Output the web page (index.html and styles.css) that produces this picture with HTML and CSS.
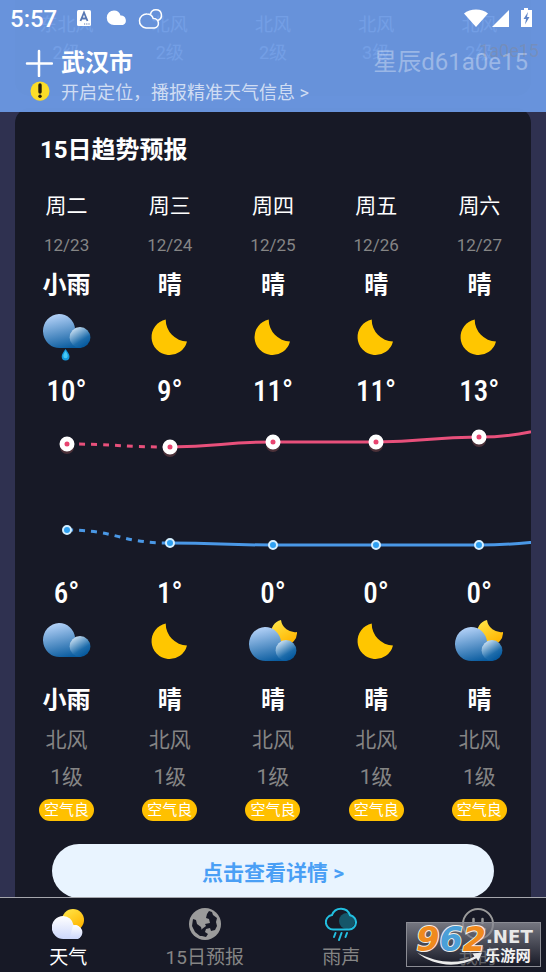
FILE: index.html
```html
<!DOCTYPE html>
<html lang="zh-CN">
<head>
    <meta charset="UTF-8">
    <meta name="viewport" content="width=device-width, initial-scale=1.0">
    <title>天气</title>
    <link rel="stylesheet" href="styles.css">
</head>
<body>

<!-- Weather icons -->
<svg class="sprite" width="0" height="0" aria-hidden="true">
    <defs>
        <linearGradient id="cloudBig" x1="0.3" y1="0" x2="0.6" y2="1">
            <stop offset="0" stop-color="#b4d2f8"/>
            <stop offset="1" stop-color="#0a5c9f"/>
        </linearGradient>
        <linearGradient id="cloudSmall" x1="0.2" y1="0.1" x2="0.7" y2="0.9">
            <stop offset="0" stop-color="#c4dcf0"/>
            <stop offset="0.7" stop-color="#1d6cab"/>
            <stop offset="1" stop-color="#075a9e"/>
        </linearGradient>
        <linearGradient id="moonGold" x1="0" y1="0" x2="0.6" y2="1">
            <stop offset="0" stop-color="#ffe94d"/>
            <stop offset="1" stop-color="#ffb400"/>
        </linearGradient>
        <linearGradient id="whiteCloud" x1="0" y1="0" x2="0" y2="1">
            <stop offset="0" stop-color="#ffffff"/>
            <stop offset="1" stop-color="#ccd7fb"/>
        </linearGradient>
        <g id="cloudShape">
            <path d="M16 1a16 16 0 0 1 16 14.500a10 10 0 0 1 5 19.500H17A16.500 17 0 0 1 16 1z" fill="url(#cloudBig)"/>
            <circle cx="37" cy="24.500" r="10.400" fill="url(#cloudSmall)"/>
        </g>
    </defs>
    <symbol id="rain" viewBox="0 0 48 48">
        <use href="#cloudShape"/>
        <path d="M22.500 36c2 3 4 5 4 7.500a3.900 3.900 0 0 1-7.800 0c0-2.500 2-4.500 3.800-7.500z" fill="#1597dc"/>
        <path d="M22.500 38c1.500 2 2.200 3.500 2.200 5a2.200 2.200 0 0 1-4.400 0c0-1.500 1-3 2.200-5z" fill="#45c8f5"/>
    </symbol>
    <symbol id="cloud" viewBox="0 0 48 48">
        <use href="#cloudShape" y="5"/>
    </symbol>
    <symbol id="moon" viewBox="0 0 48 48">
        <path d="M19.700 6.500A18 18 0 1 0 41 28.500A22 22 0 0 1 19.700 6.500z" fill="#ffc600"/>
    </symbol>
    <symbol id="moonCloud" viewBox="0 0 48 48">
        <path d="M32 3A13 13 0 1 0 48 15A14 14 0 0 1 32 3z" fill="url(#moonGold)"/>
        <use href="#cloudShape" y="9"/>
    </symbol>
</svg>

<div class="app">
    <header class="topbar">
        <div class="status">
            <span class="clock">5:57</span>
            <svg class="status-apps" width="90" height="24" viewBox="0 0 90 24" aria-hidden="true">
                <rect x="0" y="3" width="14" height="16" rx="1.500" fill="#fff"/>
                <path d="M3.500 14L7 5.500L10.500 14M4.800 11.500h4.400" fill="none" stroke="#5878b4" stroke-width="1.800"/>
                <path d="M7 17h6" stroke="#5878b4" stroke-width="1" stroke-dasharray="1.200 1"/>
                <path d="M37 3.500a7 7 0 0 1 6.500 5a5 5 0 0 1 2.500 9.500H37a7.200 7.200 0 0 1 0-14.500z" fill="#fff"/>
                <g fill="none" stroke="#fff" stroke-width="1.500">
                    <path d="M70 7a6.500 6.500 0 0 1 6.200 4.500a4.800 4.800 0 0 1 1.300 9.500H69a6.800 6.800 0 0 1 1-14z"/>
                    <path d="M73.500 7.500a5.500 5.500 0 1 1 7 6"/>
                </g>
            </svg>
            <svg class="status-net" width="72" height="24" viewBox="0 0 72 24" aria-hidden="true">
                <g fill="#fff">
                    <path d="M0 6.500C6 1 18 1 24 6.500L12 20z"/>
                    <path d="M45 3v17H28z"/>
                    <path d="M60 1h4v2h4v17H57V3h3z"/>
                </g>
                <path d="M64 5L59.500 12h2.500l-1 5.500L65.500 10H63z" fill="#5f85c8"/>
            </svg>
        </div>
        <div class="place">
            <button class="add" type="button" aria-label="添加城市">
                <svg width="28" height="28" viewBox="0 0 28 28"><path d="M14 2v25M2 14.500h25" stroke="#fff" stroke-width="2.500" stroke-linecap="round"/></svg>
            </button>
            <h1>武汉市</h1>
            <span class="user">星辰d61a0e15</span>
        </div>
        <a class="locate" href="#">
            <svg width="20" height="20" viewBox="0 0 20 20" aria-hidden="true">
                <circle cx="10" cy="11" r="9" fill="#b6b27a"/>
                <circle cx="10" cy="10" r="9.500" fill="#fbdd28"/>
                <path d="M10 4v7" stroke="#27200c" stroke-width="3.400" stroke-linecap="round"/>
                <circle cx="10" cy="15.200" r="1.700" fill="#27200c"/>
            </svg>
            开启定位，播报精准天气信息 &gt;
        </a>
        <span class="user-echo" aria-hidden="true">1a0e15</span>
    </header>

    <main class="content">
        <section class="card card-prev">
            <table class="winds">
                <tr><td>东北风</td><td>北风</td><td>北风</td><td>北风</td><td>北风</td></tr>
                <tr><td>2级</td><td>2级</td><td>2级</td><td>3级</td><td>2级</td></tr>
            </table>
        </section>

        <section class="card">
            <h2>15日趋势预报</h2>
            <table class="forecast">
                <thead>
                    <tr class="week"><th>周二</th><th>周三</th><th>周四</th><th>周五</th><th>周六</th></tr>
                </thead>
                <tbody>
                    <tr class="date"><td>12/23</td><td>12/24</td><td>12/25</td><td>12/26</td><td>12/27</td></tr>
                    <tr class="sky"><td>小雨</td><td>晴</td><td>晴</td><td>晴</td><td>晴</td></tr>
                    <tr class="icons day">
                        <td><svg><use href="#rain"/></svg></td>
                        <td><svg><use href="#moon"/></svg></td>
                        <td><svg><use href="#moon"/></svg></td>
                        <td><svg><use href="#moon"/></svg></td>
                        <td><svg><use href="#moon"/></svg></td>
                    </tr>
                    <tr class="temp"><td>10°</td><td>9°</td><td>11°</td><td>11°</td><td>13°</td></tr>
                    <tr>
                        <td class="chart" colspan="5">
                            <svg viewBox="0 0 516 155" role="img" aria-label="气温趋势">
                                <g fill="none" stroke-width="3">
                                    <path class="high" stroke-dasharray="6 6" d="M52 29C103 29 103 32 155 32"/>
                                    <path class="high" d="M155 32C206 32 206 27 258 27H361C412 27 412 22 464 22C515 22 515 12 567 12"/>
                                    <path class="low" stroke-dasharray="6 6" d="M52 115C103 115 103 128 155 128"/>
                                    <path class="low" d="M155 128C206 128 206 130 258 130H464C515 130 515 125 567 125"/>
                                </g>
                                <g class="high-glow">
                                    <circle cx="52" cy="32" r="7"/><circle cx="155" cy="35" r="7"/><circle cx="258" cy="30" r="7"/><circle cx="361" cy="30" r="7"/><circle cx="464" cy="25" r="7"/>
                                </g>
                                <g class="high-dot">
                                    <circle cx="52" cy="29" r="5"/><circle cx="155" cy="32" r="5"/><circle cx="258" cy="27" r="5"/><circle cx="361" cy="27" r="5"/><circle cx="464" cy="22" r="5"/>
                                </g>
                                <g class="low-dot">
                                    <circle cx="52" cy="115" r="4"/><circle cx="155" cy="128" r="4"/><circle cx="258" cy="130" r="4"/><circle cx="361" cy="130" r="4"/><circle cx="464" cy="130" r="4"/>
                                </g>
                            </svg>
                        </td>
                    </tr>
                    <tr class="temp"><td>6°</td><td>1°</td><td>0°</td><td>0°</td><td>0°</td></tr>
                    <tr class="icons">
                        <td><svg><use href="#cloud"/></svg></td>
                        <td><svg><use href="#moon"/></svg></td>
                        <td><svg><use href="#moonCloud"/></svg></td>
                        <td><svg><use href="#moon"/></svg></td>
                        <td><svg><use href="#moonCloud"/></svg></td>
                    </tr>
                    <tr class="sky night"><td>小雨</td><td>晴</td><td>晴</td><td>晴</td><td>晴</td></tr>
                    <tr class="wind"><td>北风</td><td>北风</td><td>北风</td><td>北风</td><td>北风</td></tr>
                    <tr class="wind"><td>1级</td><td>1级</td><td>1级</td><td>1级</td><td>1级</td></tr>
                    <tr class="air">
                        <td><span>空气良</span></td>
                        <td><span>空气良</span></td>
                        <td><span>空气良</span></td>
                        <td><span>空气良</span></td>
                        <td><span>空气良</span></td>
                    </tr>
                </tbody>
            </table>
            <button class="detail" type="button">点击查看详情 &gt;</button>
        </section>
    </main>

    <nav class="tabs">
        <a class="active" href="#">
            <svg viewBox="0 0 32 32" aria-hidden="true">
                <circle cx="21" cy="12" r="11" fill="url(#moonGold)"/>
                <path d="M11 8a10.500 10.500 0 0 1 10.500 9a7.500 7.500 0 0 1 4 14H11.500A11.500 11.500 0 0 1 11 8z" fill="url(#whiteCloud)"/>
                <path d="M21 17.500a7 7 0 1 1 4.500 13.500h-8z" fill="url(#whiteCloud)"/>
            </svg>
            天气
        </a>
        <a href="#">
            <svg viewBox="0 0 32 32" aria-hidden="true">
                <circle cx="16" cy="16" r="16" fill="#9b9b9b"/>
                <path d="M20 3l3 1 1 3 4 3-1 4 1 4-2 4-4 1-1-3-4 1-1 3 3 2-2 3-4-1-1-3 1-4 4-3-1-2 5-1-1-4-3-1 1-4zM4 11l3 1 1 4 4 3 1 4 2 5-4 0-5-4-3-6z" fill="#171926"/>
            </svg>
            15日预报
        </a>
        <a href="#">
            <svg viewBox="0 0 32 34" aria-hidden="true">
                <circle cx="22" cy="14" r="8" fill="#155669"/>
                <path d="M8.500 22.500h15.500a7.200 7.200 0 0 0 1-14.300a9.500 9.500 0 0 0-18-.2a7.300 7.300 0 0 0 1.500 14.500z" fill="none" stroke="#22bfe0" stroke-width="2"/>
                <path d="M10.500 26l-1.500 4M16.500 26l-2.500 7M22 26l-1.500 4" stroke="#22bfe0" stroke-width="2" stroke-linecap="round"/>
            </svg>
            雨声
        </a>
        <a href="#">
            <svg viewBox="0 0 32 32" aria-hidden="true">
                <circle cx="16" cy="16" r="15" fill="none" stroke="#9b9b9b" stroke-width="2"/>
                <path d="M11.500 11v4M20.500 11v4M9 21q7 6 14 0" fill="none" stroke="#9b9b9b" stroke-width="2.500" stroke-linecap="round"/>
            </svg>
            我的
        </a>
    </nav>

    <div class="stamp">
        <svg viewBox="0 0 134 45" role="img" aria-label="962.NET 乐游网">
            <path d="M8 31C28 42 52 44 68 35L66 32L76 31L72 40L70 37C50 48 24 45 8 31z" fill="#ececec"/>
            <text class="stamp-num" x="7" y="29"><tspan class="orange">9</tspan><tspan class="blue">6</tspan><tspan class="orange">2</tspan></text>
            <text class="stamp-net" x="80" y="21">.NET</text>
            <text class="stamp-cn" x="79" y="40">乐游网</text>
        </svg>
    </div>
</div>

</body>
</html>
```

FILE: styles.css
```css
/* Basic Reset */
* {
    margin: 0;
    padding: 0;
    box-sizing: border-box;
}

body {
    font-family: Roboto, "Noto Sans CJK SC", sans-serif;
    background: #2f3150;
    color: #fff;
}

a {
    color: inherit;
    text-decoration: none;
}

button {
    border: none;
    background: none;
    font-family: inherit;
    cursor: pointer;
}

.sprite {
    position: absolute;
}

.app {
    position: relative;
    display: flex;
    flex-direction: column;
    height: 100vh;
}

/* Header floats over the scrolling cards */
.topbar {
    position: absolute;
    top: 0;
    left: 0;
    right: 0;
    z-index: 2;
    height: 112px;
    padding: 7px 10px 0;
    background: rgba(108, 153, 228, 0.95);
}

.status {
    display: flex;
    align-items: center;
    height: 24px;
}

.clock {
    font-size: 24px;
    font-weight: 500;
}

.status-apps {
    margin-left: 20px;
}

.status-net {
    margin-left: auto;
}

.place {
    display: flex;
    align-items: center;
    gap: 8px;
    height: 32px;
    margin-top: 16px;
    padding: 0 8px 0 15px;
}

.add {
    height: 28px;
}

.place h1 {
    font-size: 24px;
    line-height: 32px;
    font-weight: 700;
}

.user {
    margin-left: auto;
    padding-bottom: 8px;
    font-size: 24px;
    color: rgba(255, 255, 255, 0.35);
}

.user-echo {
    position: absolute;
    top: 40px;
    right: 7px;
    font-size: 18px;
    color: rgba(150, 130, 110, 0.3);
}

.locate {
    display: flex;
    align-items: center;
    gap: 11px;
    height: 24px;
    padding-left: 20px;
    font-size: 18px;
    color: rgba(255, 255, 255, 0.7);
}

/* Cards */
.content {
    flex: 1;
    min-height: 0;
    padding: 0 15px;
    overflow-y: auto;
    scrollbar-width: none;
}

.card {
    padding: 24px 0;
    border-radius: 15px;
    background: #171926;
    overflow: hidden;
}

.card-prev {
    margin-bottom: 12px;
    padding: 11px 0 29px;
    border-radius: 0 0 15px 15px;
}

.card h2 {
    padding: 0 25px;
    margin-bottom: 18px;
    font-size: 24px;
    line-height: 36px;
}

table {
    width: 100%;
    table-layout: fixed;
    border-collapse: collapse;
    text-align: center;
}

.winds td {
    height: 28px;
    font-size: 18px;
    line-height: 28px;
}

.week th {
    height: 40px;
    font-size: 21px;
    line-height: 40px;
    font-weight: 400;
}

.date td {
    height: 38px;
    font-size: 17px;
    line-height: 38px;
    color: #858585;
}

.sky td {
    height: 42px;
    font-size: 24px;
    line-height: 42px;
    font-weight: 700;
}

.sky.night td {
    height: 57px;
    padding-top: 12px;
}

.icons svg {
    display: block;
    width: 48px;
    height: 48px;
    margin: 0 auto;
}

.icons.day td {
    height: 62px;
}

.temp td {
    height: 47px;
    font-family: "Roboto Condensed", Roboto, sans-serif;
    font-size: 29px;
    line-height: 47px;
    font-weight: 500;
}

.chart svg {
    display: block;
    width: 100%;
}

.high {
    stroke: #e8507b;
}

.low {
    stroke: #4a98e6;
}

.high-glow {
    fill: rgba(232, 120, 110, 0.25);
}

.high-dot {
    fill: #e8436f;
    stroke: #fff;
    stroke-width: 5;
}

.low-dot {
    fill: #2fa0f0;
    stroke: #d4efff;
    stroke-width: 2;
}

.wind td {
    height: 37px;
    font-size: 21px;
    line-height: 37px;
    color: #858585;
}

.air td {
    height: 28px;
}

.air span {
    display: block;
    width: 55px;
    margin: 0 auto;
    border-radius: 11px;
    background: #ffc000;
    font-size: 15px;
    line-height: 22px;
}

.detail {
    display: block;
    width: calc(100% - 74px);
    height: 54px;
    margin: 20px auto 0;
    border-radius: 27px;
    background: #e9f4ff;
    color: #4a9ff5;
    font-size: 21px;
    font-weight: 700;
}

/* Bottom tabs */
.tabs {
    display: flex;
    height: 75px;
    border-top: 1px solid #a5a6ac;
    background: #171926;
}

.tabs a {
    flex: 1;
    padding-top: 9px;
    font-size: 19px;
    line-height: 34px;
    text-align: center;
    color: #858585;
}

.tabs .active {
    color: #fff;
}

.tabs svg {
    display: block;
    width: 32px;
    height: 34px;
    margin: 0 auto;
}

/* Site stamp */
.stamp {
    position: absolute;
    right: 5px;
    bottom: 5px;
    z-index: 3;
    width: 135px;
    height: 45px;
    border: 1px solid #8b8c94;
    background: linear-gradient(rgba(140, 141, 150, 0.8), rgba(25, 27, 40, 0.4));
}

.stamp svg {
    display: block;
    width: 100%;
    height: 100%;
}

.stamp-num {
    font-family: "DejaVu Sans", sans-serif;
    font-size: 35px;
    font-weight: 700;
    font-style: italic;
    stroke: #f5f0ea;
    stroke-width: 2;
    paint-order: stroke;
}

.stamp-num .orange {
    fill: #f08a1d;
}

.stamp-num .blue {
    fill: #4a9fd8;
}

.stamp-net {
    font-family: "DejaVu Sans", sans-serif;
    font-size: 19px;
    font-weight: 700;
    fill: #e8e8e8;
}

.stamp-cn {
    font-size: 16px;
    font-weight: 700;
    fill: #f2f2f2;
}
```
